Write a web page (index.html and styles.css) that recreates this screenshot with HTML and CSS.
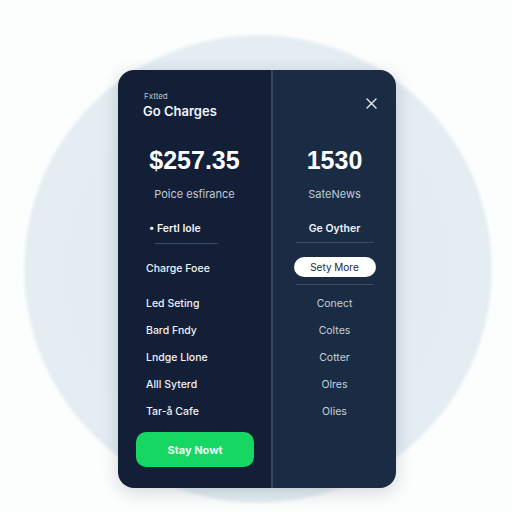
FILE: index.html
```html
<!DOCTYPE html>
<html lang="en">
<head>
    <meta charset="UTF-8">
    <title>Go Charges</title>
    <link rel="stylesheet" href="styles.css">
</head>
<body>
    <div class="stage">
        <div class="card">
            <div class="panel left">
                <div class="label">Fxtted</div>
                <div class="title">Go Charges</div>
                <div class="big">$257.35</div>
                <div class="sub">Poice esfirance</div>
                <div class="pick">&bull; Fertl Iole</div>
                <div class="rule rule-left"></div>
                <ul class="rows">
                    <li class="first">Charge Foee</li>
                    <li class="gap">Led Seting</li>
                    <li>Bard Fndy</li>
                    <li>Lndge Llone</li>
                    <li>Alll Syterd</li>
                    <li>Tar-&aring; Cafe</li>
                </ul>
                <button class="go">Stay Nowt</button>
            </div>
            <div class="divider"></div>
            <div class="panel right">
                <div class="top">
                    <svg class="close" width="11" height="11" viewBox="0 0 11 11">
                        <path d="M1 1L10 10M10 1L1 10" stroke="#e6ebf1" stroke-width="1.4" stroke-linecap="round"/>
                    </svg>
                </div>
                <div class="big">1530</div>
                <div class="sub">SateNews</div>
                <div class="pick">Ge Oyther</div>
                <div class="rule rule-right"></div>
                <div class="pill-row"><span class="pill">Sety More</span></div>
                <div class="rule rule-right"></div>
                <ul class="rows">
                    <li class="gap2">Conect</li>
                    <li>Coltes</li>
                    <li>Cotter</li>
                    <li>Olres</li>
                    <li>Olies</li>
                </ul>
            </div>
        </div>
    </div>
</body>
</html>
```

FILE: styles.css
```css
*{
    padding: 0;
    margin: 0;
    box-sizing: border-box;
}
body{
    width: 512px;
    height: 512px;
    overflow: hidden;
    font-family: "Inter", "Liberation Sans", sans-serif;
    background: radial-gradient(circle 236px at 258px 269px, #e1ebf0 0, #e3edf2 98%, #fcfdfd 100%);
}
.stage{
    padding: 70px 0 0 118px;
}
.card{
    width: 278px;
    height: 418px;
    display: flex;
    border-radius: 16px;
    overflow: hidden;
    box-shadow: 0 4px 18px rgba(20, 32, 56, 0.18);
}
.panel{
    display: flex;
    flex-direction: column;
}
.left{
    width: 153px;
    background-color: #131e37;
    padding: 21px 0 0 0;
}
.divider{
    width: 2px;
    background-color: #34485f;
}
.right{
    width: 123px;
    background-color: #192c44;
    align-items: center;
}
.label{
    font-size: 8px;
    line-height: 10px;
    color: #b8c1ce;
    padding-left: 26px;
}
.title{
    font-size: 13px;
    line-height: 18px;
    font-weight: 600;
    color: #f3f5f8;
    padding-left: 25px;
    margin-top: 1px;
}
.big{
    font-family: "Liberation Sans", "Inter", sans-serif;
    font-size: 25px;
    line-height: 30px;
    font-weight: 700;
    color: #ffffff;
    text-align: center;
}
.left .big{
    margin-top: 25px;
}
.right .big{
    margin-top: 36px;
}
.sub{
    font-size: 11px;
    line-height: 14px;
    color: #c3cbd6;
    text-align: center;
    margin-top: 12px;
}
.pick{
    font-size: 10.5px;
    line-height: 14px;
    font-weight: 600;
    color: #f3f5f8;
    margin-top: 21px;
}
.left .pick{
    padding-left: 31px;
}
.rule{
    height: 1px;
    background-color: #3b4d66;
}
.rule-left{
    width: 63px;
    margin: 7px 0 0 37px;
}
.rule-right{
    width: 78px;
    margin-top: 6px;
}
.rows{
    list-style: none;
    font-size: 10.5px;
    line-height: 27px;
    font-weight: 500;
}
.left .rows{
    color: #f1f3f7;
    padding-left: 28px;
}
.left .rows .first{
    margin-top: 11px;
}
.left .rows .gap{
    margin-top: 8px;
}
.right .rows{
    color: #c8d0da;
    text-align: center;
    font-weight: 400;
}
.right .rows .gap2{
    margin-top: 5px;
}
.top{
    width: 100%;
    display: flex;
    justify-content: flex-end;
    padding: 28px 19px 0 0;
}
.pill-row{
    margin-top: 14px;
    margin-bottom: 1px;
}
.pill{
    display: block;
    width: 82px;
    height: 20px;
    border-radius: 10px;
    background-color: #ffffff;
    color: #1d2a3d;
    font-size: 10px;
    line-height: 20px;
    text-align: center;
}
.go{
    margin: 7px 0 0 18px;
    width: 118px;
    height: 35px;
    border: 0;
    border-radius: 10px;
    background-color: #17d763;
    color: #eefcf3;
    font-family: "Inter", "Liberation Sans", sans-serif;
    font-size: 11px;
    font-weight: 700;
}
```
